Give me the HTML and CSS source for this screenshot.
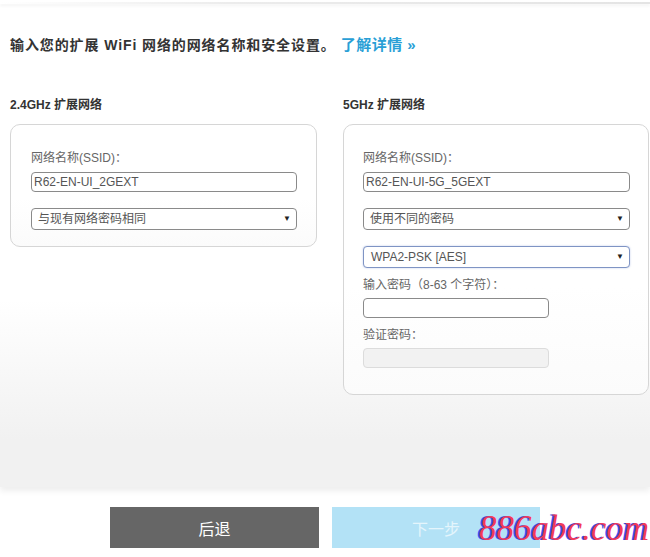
FILE: index.html
```html
<!DOCTYPE html>
<html lang="zh-CN">
<head>
<meta charset="utf-8">
<title>扩展网络设置</title>
<link rel="stylesheet" href="styles.css">
</head>
<body>
<div class="page">
  <div class="main">
    <div class="topbar"></div>
    <h1 class="intro">输入您的扩展 WiFi 网络的网络名称和安全设置。<a class="more" href="#">了解详情 »</a></h1>
    <div class="columns">
      <section class="col">
        <h2 class="col-title">2.4GHz 扩展网络</h2>
        <div class="card card-left">
          <div class="label">网络名称(SSID)：</div>
          <div class="input wide">R62-EN-UI_2GEXT</div>
          <div class="select wide gap16"><span>与现有网络密码相同</span><span class="arrow">▼</span></div>
        </div>
      </section>
      <section class="col">
        <h2 class="col-title">5GHz 扩展网络</h2>
        <div class="card card-right">
          <div class="label">网络名称(SSID)：</div>
          <div class="input wide">R62-EN-UI-5G_5GEXT</div>
          <div class="select wide gap16"><span>使用不同的密码</span><span class="arrow">▼</span></div>
          <div class="select wide gap16 focus"><span>WPA2-PSK [AES]</span><span class="arrow">▼</span></div>
          <div class="label gap9">输入密码（8-63 个字符）：</div>
          <div class="input short"></div>
          <div class="label gap9">验证密码：</div>
          <div class="input short disabled"></div>
        </div>
      </section>
    </div>
  </div>
  <div class="footer">
    <button class="btn back">后退</button>
    <button class="btn next">下一步</button>
    <span class="watermark">886abc.com</span>
  </div>
</div>
</body>
</html>
```

FILE: styles.css
```css
* { box-sizing: border-box; }
html, body { margin: 0; padding: 0; background: #fff; }
body {
  font-family: "Liberation Sans", "Noto Sans CJK SC", sans-serif;
  color: #333;
  width: 650px;
  height: 557px;
  overflow: hidden;
}
.page { display: flex; flex-direction: column; width: 650px; }
.main {
  height: 487px;
  background: linear-gradient(to bottom, #ffffff 0, #ffffff 300px, #f1f1f1 440px, #f1f1f1 100%);
  box-shadow: 0 4px 6px rgba(0,0,0,0.07);
  position: relative;
  z-index: 1;
}
.topbar {
  height: 2px;
  margin-top: 2px;
  background: linear-gradient(to right, #ffffff 0, #ececec 35%, #e4e4e4 100%);
  box-shadow: 0 2px 3px rgba(0,0,0,0.06);
}
.intro {
  margin: 0;
  padding: 31px 0 0 10px;
  font-size: 14px;
  letter-spacing: 0.9px;
  line-height: 20px;
  font-weight: bold;
  color: #333;
}
.more { color: #2a9fd6; text-decoration: none; margin-left: 5px; font-size: 15px; letter-spacing: 0.5px; }
.columns {
  display: flex;
  gap: 26px;
  padding: 42px 1px 0 10px;
}
.col { display: flex; flex-direction: column; }
.col:first-child { width: 307px; }
.col:last-child { width: 306px; }
.col-title {
  margin: 0;
  font-size: 12px;
  line-height: 16px;
  font-weight: bold;
  color: #333;
}
.card {
  margin-top: 11px;
  border: 1px solid #d6d6d6;
  border-radius: 10px;
  background: linear-gradient(to bottom, #fff 60%, #fbfbfb 100%);
  padding: 25px 0 16px 20px;
}
.card-right { padding: 25px 0 26px 19px; }
.label {
  font-size: 12px;
  line-height: 16px;
  color: #666;
  margin-bottom: 6px;
}
.label.gap9 { margin-top: 9px; margin-bottom: 5px; }
.input {
  height: 20px;
  border: 1px solid #8a8a8a;
  border-radius: 4px;
  background: #fff;
  font-size: 12px;
  line-height: 18px;
  color: #555;
  padding-left: 2px;
}
.input.wide { width: 266px; }
.card-right .input.wide { width: 267px; }
.input.short { width: 186px; }
.input.disabled { background: #f2f2f2; border-color: #dcdcdc; }
.select {
  height: 22px;
  border: 1px solid #8a8a8a;
  border-radius: 4px;
  background: #fff;
  font-size: 12px;
  line-height: 20px;
  color: #555;
  padding: 0 5px 0 6px;
  display: flex;
  justify-content: space-between;
  align-items: center;
}
.select.wide { width: 266px; }
.card-right .select.wide { width: 267px; }
.select.gap16 { margin-top: 16px; }
.select.focus { border-color: #7f94c4; box-shadow: 0 0 2px rgba(90,120,200,0.4); padding-left: 7px; }
.arrow { font-size: 8px; color: #222; }
.footer {
  position: relative;
  display: flex;
  justify-content: center;
  gap: 13px;
  padding-top: 20px;
}
.btn {
  width: 209px;
  height: 41px;
  border: none;
  margin: 0;
  font-family: "Liberation Sans", "Noto Sans CJK SC", sans-serif;
  font-size: 16px;
  color: #fff;
}
.back { background: #666666; }
.next { background: #b3e2f6; color: #e4f5fc; width: 208px; }
.watermark {
  position: absolute;
  left: 479px;
  top: 22px;
  font-family: "Liberation Serif", serif;
  font-style: italic;
  font-size: 35px;
  line-height: 40px;
  color: #f23a5a;
  text-shadow: -2px 0 0 #3b4cf0;
}
```
